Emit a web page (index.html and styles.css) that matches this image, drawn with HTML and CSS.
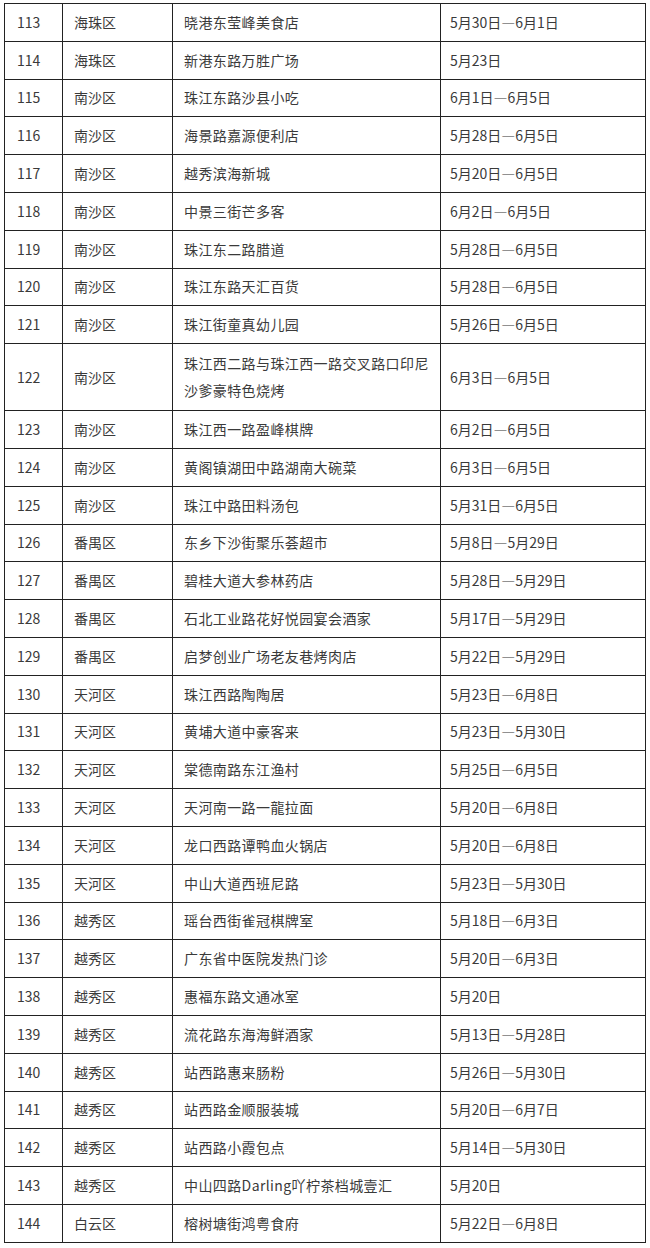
FILE: index.html
```html
<!DOCTYPE html>
<html lang="zh-CN">
<head>
<meta charset="utf-8">
<title>表格</title>
<link rel="stylesheet" href="styles.css">
</head>
<body>
<table class="list">
<colgroup>
<col class="c-no"><col class="c-area"><col class="c-place"><col class="c-date">
</colgroup>
<tbody>
<tr><td>113</td><td>海珠区</td><td>晓港东莹峰美食店</td><td>5月30日—6月1日</td></tr>
<tr><td>114</td><td>海珠区</td><td>新港东路万胜广场</td><td>5月23日</td></tr>
<tr><td>115</td><td>南沙区</td><td>珠江东路沙县小吃</td><td>6月1日—6月5日</td></tr>
<tr><td>116</td><td>南沙区</td><td>海景路嘉源便利店</td><td>5月28日—6月5日</td></tr>
<tr><td>117</td><td>南沙区</td><td>越秀滨海新城</td><td>5月20日—6月5日</td></tr>
<tr><td>118</td><td>南沙区</td><td>中景三街芒多客</td><td>6月2日—6月5日</td></tr>
<tr><td>119</td><td>南沙区</td><td>珠江东二路腊道</td><td>5月28日—6月5日</td></tr>
<tr><td>120</td><td>南沙区</td><td>珠江东路天汇百货</td><td>5月28日—6月5日</td></tr>
<tr><td>121</td><td>南沙区</td><td>珠江街童真幼儿园</td><td>5月26日—6月5日</td></tr>
<tr class="tall"><td>122</td><td>南沙区</td><td>珠江西二路与珠江西一路交叉路口印尼沙爹豪特色烧烤</td><td>6月3日—6月5日</td></tr>
<tr><td>123</td><td>南沙区</td><td>珠江西一路盈峰棋牌</td><td>6月2日—6月5日</td></tr>
<tr><td>124</td><td>南沙区</td><td>黄阁镇湖田中路湖南大碗菜</td><td>6月3日—6月5日</td></tr>
<tr><td>125</td><td>南沙区</td><td>珠江中路田料汤包</td><td>5月31日—6月5日</td></tr>
<tr><td>126</td><td>番禺区</td><td>东乡下沙街聚乐荟超市</td><td>5月8日—5月29日</td></tr>
<tr><td>127</td><td>番禺区</td><td>碧桂大道大参林药店</td><td>5月28日—5月29日</td></tr>
<tr><td>128</td><td>番禺区</td><td>石北工业路花好悦园宴会酒家</td><td>5月17日—5月29日</td></tr>
<tr><td>129</td><td>番禺区</td><td>启梦创业广场老友巷烤肉店</td><td>5月22日—5月29日</td></tr>
<tr><td>130</td><td>天河区</td><td>珠江西路陶陶居</td><td>5月23日—6月8日</td></tr>
<tr><td>131</td><td>天河区</td><td>黄埔大道中豪客来</td><td>5月23日—5月30日</td></tr>
<tr><td>132</td><td>天河区</td><td>棠德南路东江渔村</td><td>5月25日—6月5日</td></tr>
<tr><td>133</td><td>天河区</td><td>天河南一路一龍拉面</td><td>5月20日—6月8日</td></tr>
<tr><td>134</td><td>天河区</td><td>龙口西路谭鸭血火锅店</td><td>5月20日—6月8日</td></tr>
<tr><td>135</td><td>天河区</td><td>中山大道西班尼路</td><td>5月23日—5月30日</td></tr>
<tr><td>136</td><td>越秀区</td><td>瑶台西街雀冠棋牌室</td><td>5月18日—6月3日</td></tr>
<tr><td>137</td><td>越秀区</td><td>广东省中医院发热门诊</td><td>5月20日—6月3日</td></tr>
<tr><td>138</td><td>越秀区</td><td>惠福东路文通冰室</td><td>5月20日</td></tr>
<tr><td>139</td><td>越秀区</td><td>流花路东海海鲜酒家</td><td>5月13日—5月28日</td></tr>
<tr><td>140</td><td>越秀区</td><td>站西路惠来肠粉</td><td>5月26日—5月30日</td></tr>
<tr><td>141</td><td>越秀区</td><td>站西路金顺服装城</td><td>5月20日—6月7日</td></tr>
<tr><td>142</td><td>越秀区</td><td>站西路小霞包点</td><td>5月14日—5月30日</td></tr>
<tr><td>143</td><td>越秀区</td><td>中山四路Darling吖柠茶档城壹汇</td><td>5月20日</td></tr>
<tr><td>144</td><td>白云区</td><td>榕树塘街鸿粤食府</td><td>5月22日—6月8日</td></tr>
</tbody>
</table>
</body>
</html>
```

FILE: styles.css
```css
html, body {
  background: #ffffff;
}
body {
  margin: 3px 0 0 4px;
  font-family: "Noto Sans CJK SC", "Noto Sans", sans-serif;
  font-size: 14px;
  color: #3a3a3a;
}
.list {
  border-collapse: collapse;
  table-layout: fixed;
  width: 641px;
}
.c-no { width: 58px; }
.c-area { width: 110px; }
.c-place { width: 268px; }
.c-date { width: 205px; }
.list tr {
  height: 37.8px;
}
.list tr.tall {
  height: 67px;
}
.list td {
  border: 1px solid #222222;
  padding: 0 10px 0 11px;
  line-height: 27px;
  vertical-align: middle;
  word-break: break-all;
}
.list td:first-child {
  padding-left: 12px;
}
.list td:nth-child(3) {
  letter-spacing: 0.4px;
  padding-right: 6px;
}
.list td:last-child {
  padding-left: 9px;
}
```
